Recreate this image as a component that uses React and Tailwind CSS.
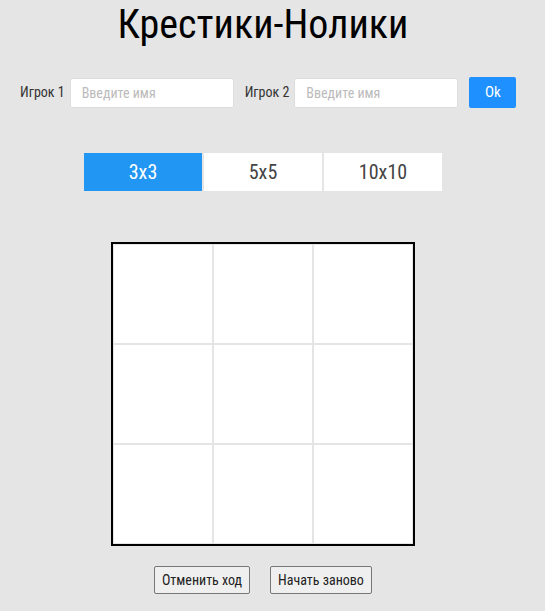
import React, { useState } from "react";

const font = { fontFamily: '"Roboto Condensed", Roboto, "Liberation Sans", sans-serif' };

const sizes = ["3x3", "5x5", "10x10"];

export default function App() {
  const [size, setSize] = useState("3x3");
  const cells = Array.from({ length: 9 });

  return (
    <div className="min-h-[611px] bg-[#e5e5e5]" style={font}>
      <div className="w-[528px] flex flex-col items-center">
        <h1 className="mt-[1px] text-[40px] leading-[48px] text-black -ml-[2px]">Крестики-Нолики</h1>

        <div className="mt-[28px] flex items-center w-full pl-[20px]">
          <span className="text-[14px] text-[#333]">Игрок 1</span>
          <input
            className="ml-[5px] w-[164px] h-[30px] bg-white border border-[#ddd] rounded-[2px] px-[11px] text-[14px] placeholder:text-[#bbb] outline-none"
            placeholder="Введите имя"
            style={font}
          />
          <span className="ml-[11px] text-[14px] text-[#333]">Игрок 2</span>
          <input
            className="ml-[5px] w-[164px] h-[30px] bg-white border border-[#ddd] rounded-[2px] px-[11px] text-[14px] placeholder:text-[#bbb] outline-none"
            placeholder="Введите имя"
            style={font}
          />
          <button className="ml-[11px] w-[47px] h-[31px] bg-[#1e90ff] text-white text-[15px] rounded-[2px]" style={font}>
            Ok
          </button>
        </div>

        <div className="mt-[45px] flex gap-[2px] -ml-[2px]">
          {sizes.map((s) => (
            <button
              key={s}
              onClick={() => setSize(s)}
              className={
                s === size
                  ? "w-[118px] h-[38px] bg-[#2196f3] text-white text-[20px]"
                  : "w-[118px] h-[38px] bg-white text-[#444] text-[20px]"
              }
              style={font}
            >
              {s}
            </button>
          ))}
        </div>

        <div className="mt-[51px] border-2 border-black grid grid-cols-3 bg-white -ml-[2px]">
          {cells.map((_, i) => (
            <div key={i} className="w-[100px] h-[100px] border border-[#e5e5e5]" />
          ))}
        </div>

        <div className="mt-[20px] flex gap-[20px] -ml-[2px]">
          <button className="w-[96px] h-[28px] bg-[#efefef] border border-[#767676] rounded-[2px] text-[14px] text-[#222]" style={font}>
            Отменить ход
          </button>
          <button className="w-[102px] h-[28px] bg-[#efefef] border border-[#767676] rounded-[2px] text-[14px] text-[#222]" style={font}>
            Начать заново
          </button>
        </div>
      </div>
    </div>
  );
}
